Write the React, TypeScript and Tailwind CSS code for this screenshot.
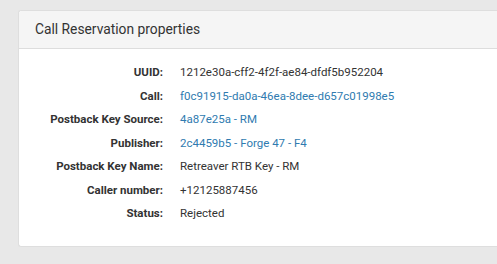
import React from "react";

const rows: { label: string; value: string; link?: boolean }[] = [
  { label: "UUID:", value: "1212e30a-cff2-4f2f-ae84-dfdf5b952204" },
  { label: "Call:", value: "f0c91915-da0a-46ea-8dee-d657c01998e5", link: true },
  { label: "Postback Key Source:", value: "4a87e25a - RM", link: true },
  { label: "Publisher:", value: "2c4459b5 - Forge 47 - F4", link: true },
  { label: "Postback Key Name:", value: "Retreaver RTB Key - RM" },
  { label: "Caller number:", value: "+12125887456" },
  { label: "Status:", value: "Rejected" },
];

export default function App() {
  return (
    <div className="w-[497px] h-[264px] overflow-hidden bg-[#e8e8e8] pt-[10px] pl-[18px] font-['Roboto',sans-serif]">
      <div className="w-[520px] bg-white rounded-[3px] border border-[#dedede] border-r-0">
        <div className="h-[38px] bg-[#f5f5f5] border-b border-[#dddddd] flex items-center pl-[16px] text-[13.8px] text-[#333333] rounded-t-[3px]">
          Call Reservation properties
        </div>
        <div className="pt-[12px] pb-[20px]">
          {rows.map((r) => (
            <div key={r.label} className="flex items-center h-[23.5px] text-[11.5px]">
              <div className="w-[144px] text-right font-bold text-[#333333]">{r.label}</div>
              <div className={"pl-[17px] " + (r.link ? "text-[#2f7bb0]" : "text-[#333333]")}>{r.value}</div>
            </div>
          ))}
        </div>
      </div>
    </div>
  );
}
